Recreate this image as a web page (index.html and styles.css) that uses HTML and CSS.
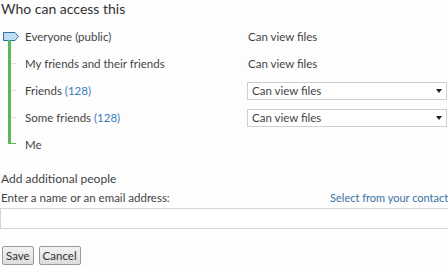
FILE: index.html
```html
<!DOCTYPE html>
<html lang="en">
<head>
  <meta charset="UTF-8" />
  <title>Who can access this</title>
  <link rel="stylesheet" href="styles.css">
</head>
<body>
  <div class="panel">
    <h2>Who can access this</h2>
    <div class="access">
      <div class="slider">
        <svg class="thumb" width="16" height="9" viewBox="0 0 16 9">
          <path d="M0.5 0.5 H12 L15.5 4.5 L12 8.5 H0.5 Z" fill="#bfdcf2" stroke="#2f6fae" stroke-width="1"/>
        </svg>
        <div class="track"></div>
        <div class="foot"></div>
      </div>
      <div class="rows">
        <div class="row">
          <span class="who">Everyone (public)</span>
          <span class="perm">Can view files</span>
        </div>
        <div class="row">
          <span class="who">My friends and their friends</span>
          <span class="perm">Can view files</span>
        </div>
        <div class="row">
          <span class="who">Friends <span class="count">(128)</span></span>
          <div class="select">Can view files<span class="caret"></span></div>
        </div>
        <div class="row">
          <span class="who">Some friends <span class="count">(128)</span></span>
          <div class="select">Can view files<span class="caret"></span></div>
        </div>
        <div class="row">
          <span class="who">Me</span>
        </div>
      </div>
    </div>

    <h3>Add additional people</h3>
    <div class="label-line">
      <span>Enter a name or an email address:</span>
      <a class="contacts" href="#">Select from your contacts</a>
    </div>
    <div class="name-input"></div>

    <div class="buttons">
      <button class="btn">Save</button>
      <button class="btn">Cancel</button>
    </div>
  </div>
</body>
</html>
```

FILE: styles.css
```css
body {
  margin: 0;
  background: #fdfdfd;
  font-family: 'Lato', 'Open Sans', sans-serif;
  color: #444;
  overflow: hidden;
}
.panel {
  width: 448px;
  height: 266px;
  padding: 0 0 0 1px;
  box-sizing: border-box;
  overflow: hidden;
}
h2 {
  margin: 0;
  font-size: 14px;
  font-weight: normal;
  color: #333;
  line-height: 17px;
}
.access {
  display: flex;
  margin-top: 6px;
}
.slider {
  position: relative;
  width: 24px;
}
.thumb {
  position: absolute;
  left: 2px;
  top: 9px;
}
.track {
  position: absolute;
  left: 7px;
  top: 17px;
  width: 3px;
  height: 104px;
  background: #5cb85c;
}
.foot {
  position: absolute;
  left: 9px;
  top: 120px;
  width: 6px;
  height: 1px;
  background: #5cb85c;
}
.rows {
  flex: 1;
  display: flex;
  flex-direction: column;
}
.row {
  display: flex;
  align-items: center;
  height: 27px;
  font-size: 11.5px;
  position: relative;
}
.row::before {
  content: "";
  position: absolute;
  left: -14px;
  top: 13px;
  width: 5px;
  height: 1px;
  background: #e2e2e2;
}
.row:first-child::before, .row:last-child::before {
  display: none;
}
.who {
  width: 223px;
  color: #444;
}
.count {
  color: #3a7cc0;
}
.perm {
  color: #444;
}
.select {
  width: 200px;
  height: 18px;
  box-sizing: border-box;
  border: 1px solid #cfcfcf;
  background: #fff;
  padding-left: 4px;
  line-height: 16px;
  position: relative;
  margin-left: -1px;
}
.caret {
  position: absolute;
  right: 4px;
  top: 6px;
  border-left: 3px solid transparent;
  border-right: 3px solid transparent;
  border-top: 4px solid #222;
}
h3 {
  margin: 13px 0 0;
  font-size: 12px;
  font-weight: normal;
  color: #444;
  line-height: 16px;
}
.label-line {
  display: flex;
  justify-content: space-between;
  white-space: nowrap;
  font-size: 11.5px;
  margin-top: 4px;
  line-height: 14px;
  width: 452px;
}
.contacts {
  color: #3a72a8;
  font-size: 11px;
  text-decoration: none;
}
.name-input {
  margin: 3px 0 0 -1px;
  width: 449px;
  height: 21px;
  box-sizing: border-box;
  border: 1px solid #d6d6d6;
  border-right: none;
  background: #fff;
}
.buttons {
  display: flex;
  gap: 5px;
  margin-top: 17px;
  margin-left: 1px;
}
.btn {
  font-family: 'Lato', 'Open Sans', sans-serif;
  font-size: 11.5px;
  color: #333;
  height: 19px;
  padding: 0 3px;
  border: 1px solid #9a9a9a;
  border-radius: 2px;
  background: linear-gradient(#f2f2f2, #dddddd);
  line-height: 16px;
}
```
